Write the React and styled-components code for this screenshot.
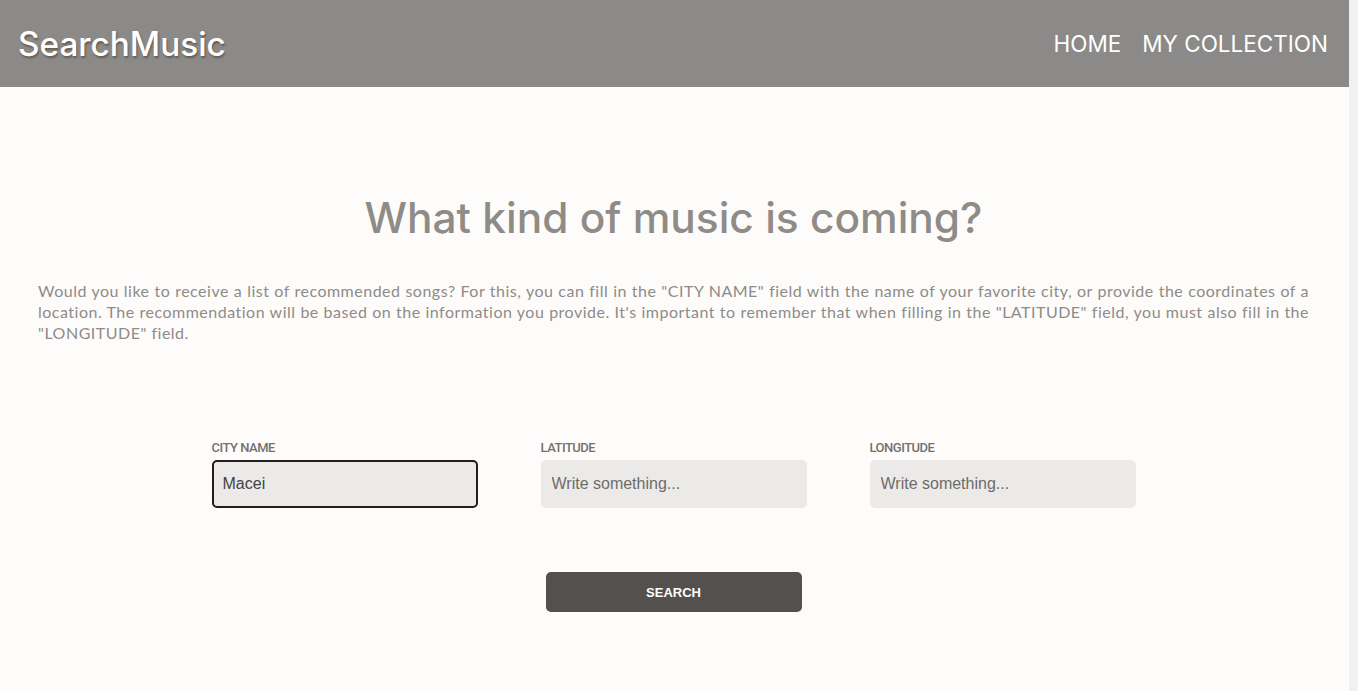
import React from 'react';
import styled, { createGlobalStyle } from 'styled-components';

const GlobalStyle = createGlobalStyle`
    html {
        background: #f1f1f1;
    }
    body {
        margin: 0 9px 0 0;
        padding: 0;
        min-height: 100vh;
        background: #fdfcfb;
    }
    * {
        box-sizing: border-box;
    }
`;

const Header = styled.header`
    height: 87px;
    background: #8b8a88;
    display: flex;
    align-items: center;
    justify-content: space-between;
    padding: 0 21px 0 18px;
`;

const Logo = styled.h1`
    margin: 0;
    font-family: 'Inter', 'Liberation Sans', sans-serif;
    font-weight: 500;
    font-size: 33.3px;
    color: #ffffff;
    text-shadow: 1px 2px 2px rgba(80, 60, 40, 0.6);
`;

const Nav = styled.nav`
    display: flex;
    gap: 21px;
`;

const NavLink = styled.a`
    font-family: 'Inter', 'Liberation Sans', sans-serif;
    font-weight: 400;
    font-size: 22.5px;
    color: #ffffff;
    text-decoration: none;
    cursor: pointer;
`;

const Main = styled.main`
    display: flex;
    flex-direction: column;
    align-items: center;
    padding: 106px 40px 80px 38px;
`;

const Title = styled.h2`
    margin: 0;
    font-family: 'Inter', 'Liberation Sans', sans-serif;
    font-weight: 500;
    font-size: 42.4px;
    line-height: 50px;
    color: #8f8b87;
`;

const Intro = styled.p`
    margin: 37px 0 0;
    width: 100%;
    font-family: 'Lato', 'Liberation Sans', sans-serif;
    font-size: 16px;
    line-height: 21px;
    letter-spacing: 0.5px;
    text-align: justify;
    color: #8f8b87;
`;

const Form = styled.form`
    margin-top: 97px;
    display: flex;
    flex-direction: column;
    align-items: center;
`;

const Fields = styled.div`
    display: grid;
    grid-template-columns: repeat(3, 266px);
    column-gap: 63px;
`;

const Field = styled.label`
    display: flex;
    flex-direction: column;
    gap: 4px;
`;

const Label = styled.span`
    font-family: 'Roboto', 'Liberation Sans', sans-serif;
    font-weight: 500;
    font-size: 13px;
    letter-spacing: -0.5px;
    line-height: 16px;
    color: #74716e;
`;

const Input = styled.input`
    height: 48px;
    width: 100%;
    padding: 0 9px;
    border-radius: 5px;
    border: 2px solid ${props => (props.$active ? '#1f1e1d' : 'transparent')};
    background: #ebeae8;
    font-family: 'Liberation Sans', Arial, sans-serif;
    font-size: 16px;
    color: #444240;
    outline: none;

    &::placeholder {
        color: #6e6c6a;
    }
`;

const SearchButton = styled.button`
    margin-top: 64px;
    width: 256px;
    height: 40px;
    border: none;
    border-radius: 5px;
    background: #53504e;
    color: #ffffff;
    font-family: 'Liberation Sans', Arial, sans-serif;
    font-weight: 700;
    font-size: 13px;
    cursor: pointer;
`;

export default function App() {
    return (
        <>
            <GlobalStyle />
            <Header>
                <Logo>SearchMusic</Logo>
                <Nav>
                    <NavLink>HOME</NavLink>
                    <NavLink>MY COLLECTION</NavLink>
                </Nav>
            </Header>
            <Main>
                <Title>What kind of music is coming?</Title>
                <Intro>
                    Would you like to receive a list of recommended songs? For this, you can fill in the
                    "CITY NAME" field with the name of your favorite city, or provide the coordinates of a
                    location. The recommendation will be based on the information you provide. It's important
                    to remember that when filling in the "LATITUDE" field, you must also fill in the
                    "LONGITUDE" field.
                </Intro>
                <Form onSubmit={e => e.preventDefault()}>
                    <Fields>
                        <Field>
                            <Label>CITY NAME</Label>
                            <Input $active defaultValue="Macei" />
                        </Field>
                        <Field>
                            <Label>LATITUDE</Label>
                            <Input placeholder="Write something..." />
                        </Field>
                        <Field>
                            <Label>LONGITUDE</Label>
                            <Input placeholder="Write something..." />
                        </Field>
                    </Fields>
                    <SearchButton type="submit">SEARCH</SearchButton>
                </Form>
            </Main>
        </>
    );
}
